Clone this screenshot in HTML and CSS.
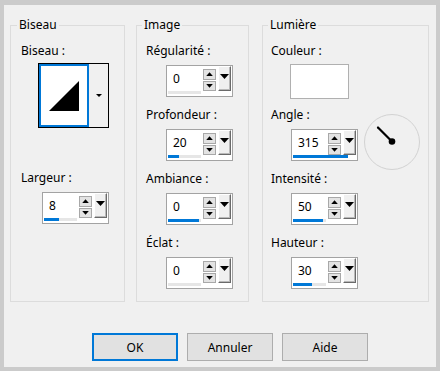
FILE: index.html
```html
<!DOCTYPE html>
<html lang="fr">
<head>
<meta charset="utf-8">
<title>Biseau</title>
<link rel="stylesheet" href="styles.css">
</head>
<body>
<div class="dialog">
  <div class="groups">
    <section class="group group-biseau">
      <div class="group-title">Biseau</div>
      <div class="group-body">
        <div class="label first">Biseau :</div>
        <div class="preview">
          <div class="preview-face">
            <svg class="preview-svg" width="46" height="59" viewBox="0 0 46 59"><polygon points="8,45 38,45 38,15" fill="#000"/></svg>
          </div>
          <div class="preview-drop"><span class="arrow-sm"></span></div>
        </div>
        <div class="label label-largeur">Largeur :</div>
        <div class="spin spin-b">
          <div class="spin-text">8</div>
          <div class="spin-btns"><span class="sb"><i class="up"></i></span><span class="sb"><i class="down"></i></span></div>
          <div class="spin-drop"><i class="drop-arrow"></i></div>
          <div class="spin-bar"><div class="bar-fill" style="width:15px"></div></div>
        </div>
      </div>
    </section>

    <section class="group group-image">
      <div class="group-title">Image</div>
      <div class="group-body">
        <div class="label first">Régularité :</div>
        <div class="spin">
          <div class="spin-text">0</div>
          <div class="spin-btns"><span class="sb"><i class="up"></i></span><span class="sb"><i class="down"></i></span></div>
          <div class="spin-drop"><i class="drop-arrow"></i></div>
          <div class="spin-bar"><div class="bar-fill" style="width:0px"></div></div>
        </div>
        <div class="label">Profondeur :</div>
        <div class="spin">
          <div class="spin-text">20</div>
          <div class="spin-btns"><span class="sb"><i class="up"></i></span><span class="sb"><i class="down"></i></span></div>
          <div class="spin-drop"><i class="drop-arrow"></i></div>
          <div class="spin-bar"><div class="bar-fill" style="width:11px"></div></div>
        </div>
        <div class="label">Ambiance :</div>
        <div class="spin">
          <div class="spin-text">0</div>
          <div class="spin-btns"><span class="sb"><i class="up"></i></span><span class="sb"><i class="down"></i></span></div>
          <div class="spin-drop"><i class="drop-arrow"></i></div>
          <div class="spin-bar"><div class="bar-fill" style="width:31px"></div></div>
        </div>
        <div class="label">Éclat :</div>
        <div class="spin">
          <div class="spin-text">0</div>
          <div class="spin-btns"><span class="sb"><i class="up"></i></span><span class="sb"><i class="down"></i></span></div>
          <div class="spin-drop"><i class="drop-arrow"></i></div>
          <div class="spin-bar"><div class="bar-fill" style="width:0px"></div></div>
        </div>
      </div>
    </section>

    <section class="group group-lumiere">
      <div class="group-title">Lumière</div>
      <div class="group-body">
        <div class="label first">Couleur :</div>
        <div class="color-box"></div>
        <div class="label label-angle">Angle :</div>
        <div class="angle-row">
          <div class="spin">
            <div class="spin-text">315</div>
            <div class="spin-btns"><span class="sb"><i class="up"></i></span><span class="sb"><i class="down"></i></span></div>
            <div class="spin-drop"><i class="drop-arrow"></i></div>
            <div class="spin-bar"><div class="bar-fill" style="width:55px"></div></div>
          </div>
          <svg class="dial" width="58" height="58" viewBox="0 0 58 58">
            <circle cx="29" cy="29" r="27.5" fill="none" stroke="#d2d2d2" stroke-width="1"/>
            <line x1="29" y1="28.5" x2="15" y2="14.5" stroke="#000" stroke-width="2.2" stroke-linecap="round"/>
            <circle cx="29" cy="28.5" r="3.3" fill="#000"/>
          </svg>
        </div>
        <div class="label">Intensité :</div>
        <div class="spin">
          <div class="spin-text">50</div>
          <div class="spin-btns"><span class="sb"><i class="up"></i></span><span class="sb"><i class="down"></i></span></div>
          <div class="spin-drop"><i class="drop-arrow"></i></div>
          <div class="spin-bar"><div class="bar-fill" style="width:30px"></div></div>
        </div>
        <div class="label">Hauteur :</div>
        <div class="spin">
          <div class="spin-text">30</div>
          <div class="spin-btns"><span class="sb"><i class="up"></i></span><span class="sb"><i class="down"></i></span></div>
          <div class="spin-drop"><i class="drop-arrow"></i></div>
          <div class="spin-bar"><div class="bar-fill" style="width:19px"></div></div>
        </div>
      </div>
    </section>
  </div>

  <div class="buttons">
    <button class="btn btn-default" type="button">OK</button>
    <button class="btn" type="button">Annuler</button>
    <button class="btn" type="button">Aide</button>
  </div>
</div>
</body>
</html>
```

FILE: styles.css
```css
html, body {
  margin: 0;
  padding: 0;
  overflow: hidden;
}

body {
  background: #cbcbcb;
  padding: 5px 4px 4px 4px;
  font-family: "Noto Sans", "Open Sans", sans-serif;
  font-size: 12px;
  color: #000;
}

.dialog {
  box-sizing: border-box;
  width: 432px;
  height: 362px;
  background: #f0f0f0;
  padding: 20px 0 0 6px;
}

.groups {
  display: flex;
  align-items: flex-start;
}

.group {
  box-sizing: border-box;
  height: 277px;
  border: 1px solid #dcdcdc;
  flex: none;
}

.group-biseau { width: 115px; margin-right: 11px; }
.group-image { width: 113px; margin-right: 13px; }
.group-lumiere { width: 167px; }

.group-title {
  width: fit-content;
  margin: -9px 0 0 5px;
  padding: 0 2px;
  line-height: 16px;
  background: #f0f0f0;
}

.group-biseau .group-title { margin-left: 6px; }

.group-body { padding-left: 9px; }
.group-biseau .group-body { padding-left: 10px; }
.group-lumiere .group-body { padding-left: 8px; }

.label {
  line-height: 16px;
  margin-top: 10px;
  white-space: nowrap;
}

.label.first { margin-top: 10px; }
.label-largeur { margin-top: 42px; }
.label-angle { margin-top: 8px; }

/* Bevel preview */
.preview {
  display: flex;
  width: 71px;
  height: 65px;
  box-sizing: border-box;
  border: 1px solid #000;
  margin: 4px 0 0 17px;
}

.preview-face {
  box-sizing: border-box;
  width: 50px;
  height: 63px;
  border: 2px solid #0078d7;
  background: #fff;
}

.preview-svg { display: block; }

.preview-drop {
  flex: 1;
  background: #f0f0f0;
  display: flex;
  align-items: center;
  justify-content: center;
}

.arrow-sm {
  width: 0;
  height: 0;
  border-left: 3px solid transparent;
  border-right: 3px solid transparent;
  border-top: 3px solid #000;
}

/* Spin control */
.spin {
  box-sizing: border-box;
  width: 67px;
  height: 32px;
  border: 1px solid #a3a3a3;
  background: #fff;
  display: grid;
  grid-template-columns: 36px 13px 2px 13px;
  grid-template-rows: 25px 3px;
  padding: 0 1px 2px 0;
  margin: 6px 0 0 20px;
  flex: none;
}

.group-biseau .spin { margin-left: 21px; }

.spin-text {
  grid-column: 1;
  grid-row: 1;
  padding: 5px 0 0 6px;
  line-height: 16px;
}

.spin-btns {
  grid-column: 2;
  grid-row: 1;
  display: flex;
  flex-direction: column;
  gap: 1px;
  padding-top: 3px;
}

.sb {
  box-sizing: border-box;
  height: 11px;
  border: 1px solid #a8a8a8;
  background: #e3e3e3;
  display: flex;
  align-items: center;
  justify-content: center;
}

.sb i {
  display: block;
  width: 7px;
  height: 4px;
  background: #000;
}

.sb i.up { clip-path: polygon(50% 0, 100% 100%, 0 100%); }
.sb i.down { clip-path: polygon(0 0, 100% 0, 50% 100%); }

.spin-drop {
  grid-column: 4;
  grid-row: 1;
  box-sizing: border-box;
  background: #f0f0f0;
  border: 1px solid;
  border-color: #ffffff #6a6a6a #6a6a6a #ffffff;
  box-shadow: inset -1px -1px 0 #b9b9b9;
  display: flex;
  justify-content: center;
  padding-top: 7px;
}

.drop-arrow {
  display: block;
  width: 9px;
  height: 5px;
  background: #000;
  clip-path: polygon(0 0, 100% 0, 50% 100%);
}

.spin-bar {
  grid-column: 1 / -1;
  grid-row: 2;
  margin-left: 1px;
  background: linear-gradient(#e6e6e6, #e6e6e6) no-repeat left top / 33px 100%;
}

.bar-fill {
  height: 3px;
  background: #0078d7;
}

/* Lumière */
.color-box {
  box-sizing: border-box;
  width: 59px;
  height: 35px;
  border: 1px solid #b0b0b0;
  background: #fff;
  margin: 5px 0 0 19px;
}

.angle-row {
  display: flex;
  align-items: center;
  gap: 5px;
}

.dial {
  display: block;
  margin: -13px 0 -13px 0;
  flex: none;
}

/* Buttons */
.buttons {
  display: flex;
  gap: 9px;
  margin-top: 31px;
  padding-left: 82px;
}

.btn {
  box-sizing: border-box;
  width: 86px;
  height: 28px;
  margin: 0;
  padding: 0;
  border: 1px solid #adadad;
  background: #e1e1e1;
  font-family: "Noto Sans", "Open Sans", sans-serif;
  font-size: 12px;
  color: #000;
}

.btn-default {
  border: 2px solid #0078d7;
}
```
